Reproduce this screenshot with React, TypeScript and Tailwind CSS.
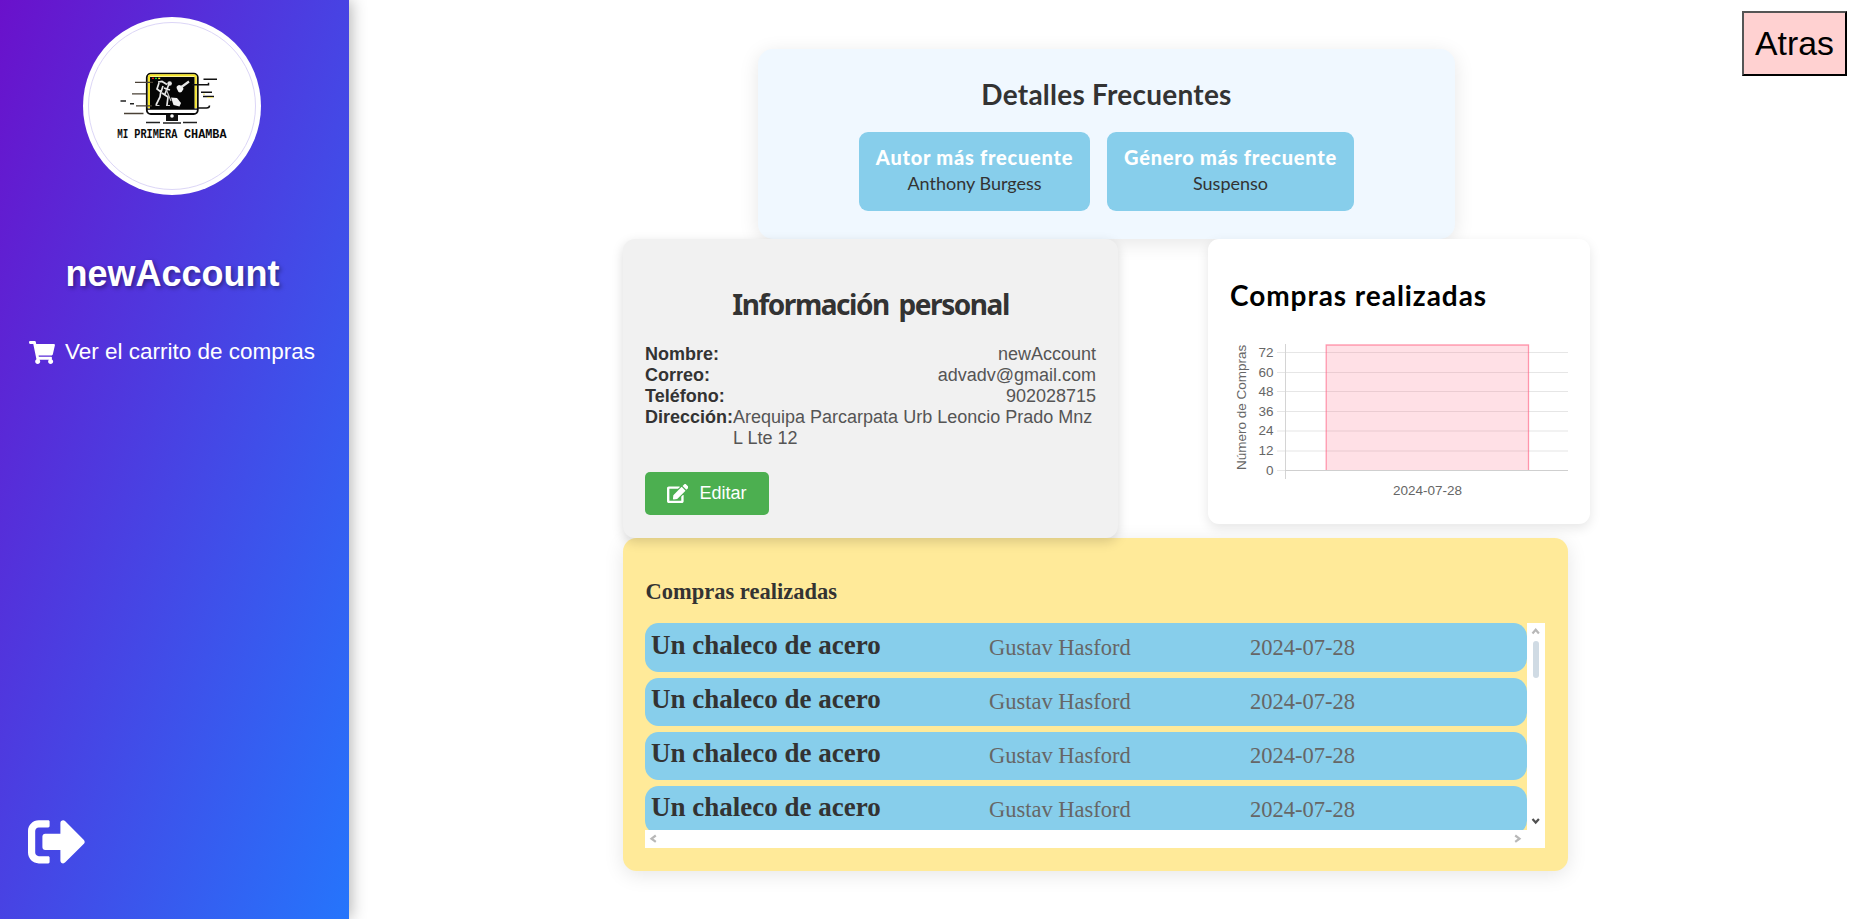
import React from "react";
import { FaShoppingCart, FaSignOutAlt, FaEdit } from "react-icons/fa";

const purchases = [
  { title: "Un chaleco de acero", author: "Gustav Hasford", date: "2024-07-28" },
  { title: "Un chaleco de acero", author: "Gustav Hasford", date: "2024-07-28" },
  { title: "Un chaleco de acero", author: "Gustav Hasford", date: "2024-07-28" },
  { title: "Un chaleco de acero", author: "Gustav Hasford", date: "2024-07-28" },
];

const person = [
  { label: "Nombre:", value: "newAccount" },
  { label: "Correo:", value: "advadv@gmail.com" },
  { label: "Teléfono:", value: "902028715" },
  { label: "Dirección:", value: "Arequipa Parcarpata Urb Leoncio Prado Mnz L Lte 12" },
];

const ticks = [
  { v: 72, y: 22.5 },
  { v: 60, y: 42.5 },
  { v: 48, y: 61.5 },
  { v: 36, y: 81.5 },
  { v: 24, y: 101 },
  { v: 12, y: 121 },
];

function Logo() {
  return (
    <svg viewBox="0 0 140 100" className="h-[100px] w-[140px]" fill="none">
      <rect x="46.8" y="23.6" width="51" height="40.4" rx="4" fill="#fff" stroke="#0a0a0a" strokeWidth="1.8" />
      <path d="M49 58V27q0-1.6 1.6-1.6H94q1.6 0 1.6 1.6v31" stroke="#f5e52a" strokeWidth="2.2" />
      <rect x="50" y="27" width="44.5" height="32" fill="#050505" />
      <path d="M46.5 59.2H98" stroke="#050505" strokeWidth="1.2" />
      <path d="M52 28.4h2" stroke="#e11" strokeWidth="1.4" />
      <path d="M55 28.4h2" stroke="#1c3" strokeWidth="1.4" />
      <path d="M58.2 28.4h2" stroke="#ee2" strokeWidth="1.4" />
      <path d="M66 65h12v6H66z" fill="#111" />
      <circle cx="72" cy="66" r="1.8" fill="#fff" />
      <path d="M46 72.6h14M63 72.9h18M83 72.6h14" stroke="#222" strokeWidth="1.5" />
      <path d="M35 32.3h18M32 43.8h14M36 55.8h16M24 63.5h19.5" stroke="#4a4136" strokeWidth="1.3" />
      <path d="M20.5 51h5.5M30 53.8h4" stroke="#222" strokeWidth="1.4" />
      <path d="M103.5 29.2h13.5M92 34.8h16.5v-2M101 42.3h11M103 46.4h11M97 58h9.500q3 0 3-2.500" stroke="#111" strokeWidth="1.5" />
      <path d="M103 44.2h2M107 47.6h6" stroke="#f2e46a" strokeWidth="1" />
      <circle cx="69.6" cy="33.5" r="2.3" fill="#e4e4e4" />
      <path d="M58 32l4-.5 5 3M59 33l-2 6 4 3 2-6M61 40l-1 7-4 8M62 43l6 4-1 8M64 38l6 2M69 34l-4 10" stroke="#e8e8e8" strokeWidth="1.7" />
      <path d="M55.500 55.500h4M66 55.500h4M66 39l5 12" stroke="#ccc" strokeWidth="1.1" />
      <path d="M71 47.5l6 .5 4 5-1.500 3.500-6-1.500z" fill="#f2f2f2" />
      <path d="M77 39q-1.500-3 2-4l3.500 1 1 3q-2 4.500-5 3z" fill="#f4f4f4" />
      <path d="M81.5 37l7.500-5.500" stroke="#e6e6e6" strokeWidth="2.2" />
      <g fontSize="12" fontWeight="700" fill="#0b0b0b" fontFamily="'Liberation Mono', monospace">
        <text x="17.2" y="87.500" textLength="11" lengthAdjust="spacingAndGlyphs">MI</text>
        <text x="34.3" y="87.500" textLength="43" lengthAdjust="spacingAndGlyphs">PRIMERA</text>
        <text x="84" y="87.500" textLength="42.5" lengthAdjust="spacingAndGlyphs">CHAMBA</text>
      </g>
    </svg>
  );
}

function Sidebar() {
  return (
    <aside className="flex h-[919px] w-[349px] shrink-0 flex-col bg-[linear-gradient(to_bottom_right,#6a11cb,#2575fc)] text-white shadow-[2px_0_15px_rgba(0,0,0,0.3)]">
      <div className="mt-[17px] ml-[83px] size-[178px] rounded-full bg-white p-[5px]">
        <div className="flex size-[168px] items-center justify-center rounded-full border border-[#dcd6f7]">
          <div className="relative -left-[2px] -top-[6px]">
            <Logo />
          </div>
        </div>
      </div>
      <h1 className="mt-[58px] w-[345px] text-center text-[36px] leading-[42px] font-bold [text-shadow:2px_2px_4px_rgba(0,0,0,0.4)]">
        newAccount
      </h1>
      <a className="mt-[41px] ml-[29px] flex h-[32px] items-center">
        <FaShoppingCart className="h-[23px] w-[26px]" />
        <span className="ml-[10px] text-[22.5px] leading-[26px] whitespace-nowrap">Ver el carrito de compras</span>
      </a>
      <FaSignOutAlt className="mt-auto mb-[48px] ml-[28px] size-[57.6px]" />
    </aside>
  );
}

function FrequentDetails() {
  return (
    <section className="ml-[135px] h-[190px] w-[697px] rounded-[15px] bg-[#f0f8ff] pt-[28px] font-['Lato',sans-serif] text-[#333] shadow-[0_4px_20px_rgba(0,0,0,0.1)]">
      <h2 className="text-center text-[28px] leading-[34px] font-bold tracking-[0.25px]">Detalles Frecuentes</h2>
      <div className="mt-[21px] ml-[101px] flex gap-[17px] text-center">
        <div className="h-[79px] w-[231px] rounded-[9px] bg-[#87ceeb] pt-[13px]">
          <h3 className="text-[20px] leading-[25px] font-black tracking-[0.75px] text-white">Autor más frecuente</h3>
          <p className="text-[18px] leading-[26px]">Anthony Burgess</p>
        </div>
        <div className="h-[79px] w-[247px] rounded-[9px] bg-[#87ceeb] pt-[13px]">
          <h3 className="text-[20px] leading-[25px] font-black tracking-[0.75px] text-white">Género más frecuente</h3>
          <p className="text-[18px] leading-[26px]">Suspenso</p>
        </div>
      </div>
    </section>
  );
}

function PersonalInfo() {
  return (
    <section className="relative z-10 h-[299px] w-[495px] rounded-[12px] bg-[#f1f1f1] px-[22px] pt-[45px] text-[18px] leading-[21px] shadow-[0_4px_12px_rgba(0,0,0,0.15)]">
      <h2 className="text-center font-['Comic_Sans_MS','Noto_Sans',sans-serif] text-[28px] leading-[40px] font-bold tracking-[-1.45px] text-[#333] [word-spacing:4px]">
        Información personal
      </h2>
      <dl className="mt-[20px]">
        {person.map((p) => (
          <div key={p.label} className="flex justify-between">
            <dt className="font-bold text-[#333]">{p.label}</dt>
            <dd className="text-[#555]">{p.value}</dd>
          </div>
        ))}
      </dl>
      <button className="mt-[23px] flex h-[43px] w-[124px] items-center rounded-[5px] bg-[#4caf50] pl-[22px] text-white">
        <FaEdit className="h-[19px] w-[21.4px]" />
        <span className="ml-[11px]">Editar</span>
      </button>
    </section>
  );
}

function PurchaseChart() {
  return (
    <section className="h-[285px] w-[382px] rounded-[11px] bg-white pt-[39px] pl-[22px] shadow-[0_4px_12px_rgba(0,0,0,0.1)]">
      <h2 className="font-['Lato',sans-serif] text-[28px] leading-[34px] font-bold tracking-[0.95px] text-black">Compras realizadas</h2>
      <svg viewBox="0 0 340 180" className="mt-[18px] h-[180px] w-[340px]" fontSize="13.5" fill="#666" fontFamily="'Liberation Sans', Arial, sans-serif">
        {ticks.map((t) => (
          <g key={t.v}>
            <path d={`M47 ${t.y}H338`} stroke="#e6e6e6" strokeWidth="1.1" />
            <text x="43.5" y={t.y + 4} textAnchor="end">
              {t.v}
            </text>
          </g>
        ))}
        <text x="43.5" y="144.5" textAnchor="end">0</text>
        <path d="M47 140.5H56" stroke="#e6e6e6" />
        <path d="M55.5 14V149" stroke="#d4d4d4" />
        <path d="M55 140.5H338" stroke="#cfcfcf" />
        <rect x="96" y="15" width="203" height="125" fill="#ff6384" fillOpacity="0.2" />
        <path d="M96.2 140V15H298.5V140" fill="none" stroke="#ff6384" strokeOpacity="0.6" strokeWidth="1.3" />
        <text x="197.5" y="164.5" textAnchor="middle">2024-07-28</text>
        <text transform="translate(16 140) rotate(-90)">Número de Compras</text>
      </svg>
    </section>
  );
}

function PurchaseList() {
  return (
    <section className="h-[333px] w-[945px] rounded-[13.5px] bg-[#ffea99] px-[22px] pt-[41px] font-['Liberation_Serif',serif] shadow-[0_4px_20px_rgba(0,0,0,0.1)]">
      <h3 className="pl-[0.5px] text-[22.5px] leading-[26px] font-bold text-[#333]">Compras realizadas</h3>
      <div className="mt-[18px] grid h-[225px] w-[900px] grid-cols-[882px_18px] grid-rows-[207px_18px]">
        <ul className="flex flex-col gap-[6px] overflow-hidden">
          {purchases.map((p, i) => (
            <li key={i} className="flex h-[48px] shrink-0 rounded-[13.5px] bg-[#87ceeb] pl-[6px] text-[22.5px] leading-[26px] text-[#666] first:h-[49px] first:pt-[1px]">
              <span className="mt-[6px] w-[338px] text-[27px] leading-[31px] font-bold text-[#333]">{p.title}</span>
              <span className="mt-[11px] w-[261px]">{p.author}</span>
              <span className="mt-[11px]">{p.date}</span>
            </li>
          ))}
        </ul>
        <div className="flex flex-col items-center bg-white">
          <svg viewBox="0 0 18 18" className="size-[18px] shrink-0" fill="none" stroke="#b8b8b8" strokeWidth="2.2">
            <path d="M5.5 10.500L8.700 6.700l3.200 3.800" />
          </svg>
          <div className="h-[37px] w-[6px] rounded-full bg-[#d0dbe4]" />
          <svg viewBox="0 0 18 18" className="mt-auto size-[18px] shrink-0" fill="none" stroke="#505050" strokeWidth="2.2">
            <path d="M5.500 7L8.700 10.500l3.200-3.500" />
          </svg>
        </div>
        <div className="flex justify-between bg-white">
          <svg viewBox="0 0 18 18" className="size-[18px]" fill="none" stroke="#b8b8b8" strokeWidth="2.2">
            <path d="M10.800 5.500L6.500 8.700l4.300 3.200" />
          </svg>
          <svg viewBox="0 0 18 18" className="size-[18px]" fill="none" stroke="#b8b8b8" strokeWidth="2.2">
            <path d="M6.200 5.500L10.500 8.700l-4.300 3.200" />
          </svg>
        </div>
        <div className="bg-white" />
      </div>
    </section>
  );
}

export default function App() {
  return (
    <div className="flex h-[919px] w-[1855px] overflow-hidden bg-white font-['Liberation_Sans',Arial,sans-serif]">
      <Sidebar />
      <main className="ml-[274px] flex w-[967px] shrink-0 flex-col pt-[49px]">
        <FrequentDetails />
        <div className="flex h-[299px] justify-between">
          <PersonalInfo />
          <PurchaseChart />
        </div>
        <PurchaseList />
      </main>
      <button className="mt-[11px] mr-[8px] ml-auto h-[65px] w-[105px] border-2 border-t-[#555] border-r-black border-b-black border-l-[#555] bg-[#ffd1d1] pb-[2px] text-[33.75px] leading-[38px] text-black">
        Atras
      </button>
    </div>
  );
}
